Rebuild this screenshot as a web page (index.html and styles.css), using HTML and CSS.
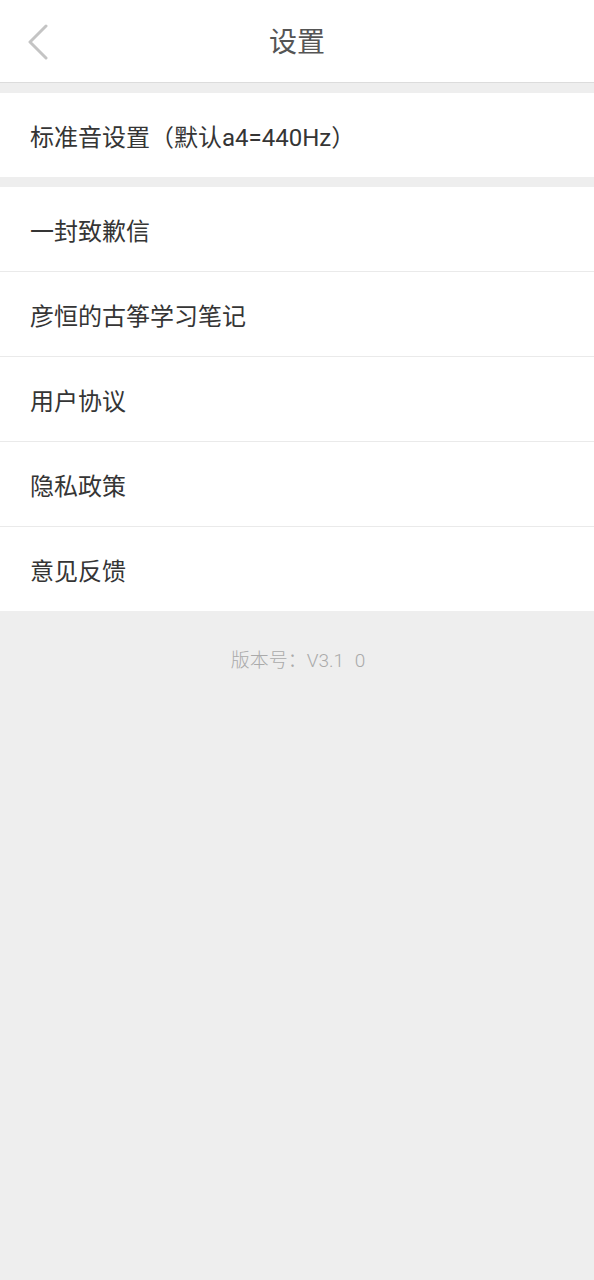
FILE: index.html
```html
<!DOCTYPE html>
<html lang="zh-CN">
<head>
<meta charset="utf-8">
<title>设置</title>
<link rel="stylesheet" href="styles.css">
</head>
<body>
<div class="page">
  <header class="header">
    <div class="back">
      <svg width="24" height="36" viewBox="0 0 24 36"><polyline points="20,2 4,18 20,34" fill="none" stroke="#c4c4c4" stroke-width="3" stroke-linecap="round" stroke-linejoin="round"/></svg>
    </div>
    <div class="title">设置</div>
  </header>
  <section class="group first">
    <div class="row">标准音设置（默认a4=440Hz）</div>
  </section>
  <section class="group">
    <div class="row">一封致歉信</div>
    <div class="row">彦恒的古筝学习笔记</div>
    <div class="row">用户协议</div>
    <div class="row">隐私政策</div>
    <div class="row">意见反馈</div>
  </section>
  <div class="version">版本号：V3.1 0</div>
</div>
</body>
</html>
```
FILE: styles.css
```css
html, body {
  margin: 0;
  padding: 0;
  background: #eeeeee;
}
body {
  font-family: "Roboto", "Noto Sans CJK SC", sans-serif;
}
.page {
  width: 594px;
  min-height: 1280px;
  background: #eeeeee;
}
.header {
  position: relative;
  height: 82px;
  background: #ffffff;
  border-bottom: 1px solid #dcdcdc;
  display: flex;
  align-items: center;
  justify-content: center;
}
.back {
  position: absolute;
  left: 26px;
  top: 24px;
  width: 24px;
  height: 36px;
}
.back svg {
  display: block;
}
.title {
  font-size: 28px;
  color: #555555;
  line-height: 1;
  margin-top: 4px;
}
.group {
  background: #ffffff;
  margin-top: 10px;
}
.row {
  height: 84px;
  display: flex;
  align-items: center;
  padding-left: 30px;
  font-size: 24px;
  color: #353535;
  border-top: 1px solid #eaeaea;
}
.row:first-child {
  border-top: none;
}
.version {
  margin-top: 37px;
  text-align: center;
  font-size: 19px;
  font-weight: 300;
  word-spacing: 6px;
  color: #aaaaaa;
  line-height: 26px;
  padding-left: 2px;
}
```
